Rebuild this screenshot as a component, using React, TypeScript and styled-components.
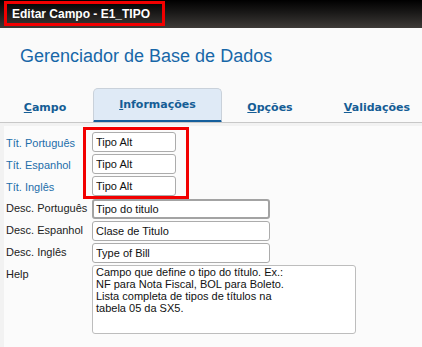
import React from "react";
import styled, { createGlobalStyle } from "styled-components";

const Global = createGlobalStyle`
  html, body { margin: 0; padding: 0; }
  body {
    background: #fafafa;
    font-family: "Liberation Sans", Arial, sans-serif;
    width: 422px;
    height: 347px;
    overflow: hidden;
  }
`;

const Window = styled.div`
  display: flex;
  flex-direction: column;
  width: 422px;
  height: 347px;
  background: #fafafa;
`;

const TitleBar = styled.div`
  height: 28px;
  box-sizing: border-box;
  padding: 1px 0 0 4px;
  background: linear-gradient(to bottom, #000000 0%, #1a1918 45%, #3e3b38 100%);
  display: flex;
  align-items: flex-start;
`;

const TitleBox = styled.div`
  height: 25px;
  box-sizing: border-box;
  border: 3px solid #f20000;
  padding: 0 12px 0 5px;
  display: flex;
  align-items: center;
  color: #ffffff;
  font-weight: bold;
  font-size: 12px;
  font-family: "Liberation Sans", Arial, sans-serif;
`;

const Header = styled.div`
  padding: 18px 0 0 20px;
  height: 60px;
  box-sizing: border-box;
`;

const Heading = styled.h1`
  margin: 0;
  font-weight: normal;
  font-size: 18px;
  line-height: 20px;
  color: #1767a8;
  font-family: "Liberation Sans", Arial, sans-serif;
`;

const TabBar = styled.div`
  display: flex;
  gap: 3px;
  height: 35px;
  box-sizing: border-box;
  border-bottom: 1px solid #c8c8c8;
  overflow: hidden;
`;

const Tab = styled.div<{ $w: number; $active?: boolean }>`
  flex: 0 0 ${(p) => p.$w}px;
  box-sizing: border-box;
  height: ${(p) => (p.$active ? 35 : 34)}px;
  display: flex;
  justify-content: center;
  align-items: flex-start;
  padding-top: ${(p) => (p.$active ? 9 : 13)}px;
  font-family: "DejaVu Sans", Verdana, sans-serif;
  font-weight: bold;
  font-size: 11px;
  line-height: 13px;
  color: #155d95;
  background: ${(p) => (p.$active ? "#dfeaf6" : "transparent")};
  border: ${(p) => (p.$active ? "1px solid #c9d1da" : "none")};
  border-bottom: ${(p) => (p.$active ? "3px solid #155f9c" : "none")};
  border-radius: ${(p) => (p.$active ? "5px 5px 0 0" : "0")};
`;

const Key = styled.span`
  text-decoration: underline;
`;

const Content = styled.div`
  flex: 1;
  background: #f2f2f2;
  padding: 3px 0 0 4px;
`;

const Panel = styled.div`
  height: 100%;
  background: #fbfbfb;
  padding-top: 1px;
  box-sizing: border-box;
`;

const TopGroup = styled.div`
  display: flex;
`;

const LabelCol = styled.div`
  width: 79px;
  box-sizing: border-box;
  padding: 5px 0 0 2px;
  display: flex;
  flex-direction: column;
`;

const Label = styled.div<{ $blue?: boolean }>`
  font-size: 11px;
  line-height: ${(p) => (p.$blue ? "22px" : "14px")};
  padding-top: ${(p) => (p.$blue ? 0 : 2)}px;
  padding-left: ${(p) => (p.$blue ? 0 : 2)}px;
  color: ${(p) => (p.$blue ? "#1d6eaa" : "#222222")};
  white-space: nowrap;
`;

const RedBox = styled.div`
  width: 106px;
  height: 72px;
  box-sizing: border-box;
  border: 3px solid #f20000;
  padding: 2px 0 0 6px;
  display: flex;
  flex-direction: column;
  gap: 2px;
`;

const Field = styled.input<{ $w: number; $focus?: boolean }>`
  width: ${(p) => p.$w}px;
  height: 20px;
  box-sizing: border-box;
  margin: 0;
  border: ${(p) => (p.$focus ? "2px solid #a3a3a3" : "1px solid #acacac")};
  border-radius: 3px;
  padding: 0 ${(p) => (p.$focus ? 2 : 3)}px;
  background: #ffffff;
  font-family: "Liberation Sans", Arial, sans-serif;
  font-size: 11px;
  color: #111111;
  outline: none;
`;

const DescGrid = styled.div`
  display: grid;
  grid-template-columns: 88px auto;
  row-gap: 2px;
  align-items: start;
  justify-items: start;
`;

const HelpArea = styled.textarea`
  width: 264px;
  height: 69px;
  box-sizing: border-box;
  margin: 0;
  border: 1px solid #bdbdbd;
  border-radius: 3px;
  padding: 0 3px;
  background: #ffffff;
  font-family: "Liberation Sans", Arial, sans-serif;
  font-size: 11px;
  line-height: 12px;
  color: #111111;
  resize: none;
  overflow: hidden;
  outline: none;
`;

const tabs = [
  { key: "C", rest: "ampo", w: 90 },
  { key: "I", rest: "nformações", w: 129, active: true },
  { key: "O", rest: "pções", w: 90 },
  { key: "V", rest: "alidações", w: 118 },
];

const helpText =
  "Campo que define o tipo do título. Ex.:\nNF para Nota Fiscal, BOL para Boleto.\nLista completa de tipos de títulos na\ntabela 05 da SX5.";

export default function App() {
  return (
    <Window>
      <Global />
      <TitleBar>
        <TitleBox>Editar Campo - E1_TIPO</TitleBox>
      </TitleBar>
      <Header>
        <Heading>Gerenciador de Base de Dados</Heading>
      </Header>
      <TabBar>
        {tabs.map((t) => (
          <Tab key={t.key} $w={t.w} $active={t.active}>
            <span>
              <Key>{t.key}</Key>
              {t.rest}
            </span>
          </Tab>
        ))}
      </TabBar>
      <Content>
        <Panel>
          <TopGroup>
            <LabelCol>
              <Label $blue>Tít. Português</Label>
              <Label $blue>Tít. Espanhol</Label>
              <Label $blue>Tít. Inglês</Label>
            </LabelCol>
            <RedBox>
              <Field $w={84} readOnly value="Tipo Alt" />
              <Field $w={84} readOnly value="Tipo Alt" />
              <Field $w={84} readOnly value="Tipo Alt" />
            </RedBox>
          </TopGroup>
          <DescGrid>
            <Label>Desc. Português</Label>
            <Field $w={178} $focus readOnly value="Tipo do titulo" />
            <Label>Desc. Espanhol</Label>
            <Field $w={178} readOnly value="Clase de Titulo" />
            <Label>Desc. Inglês</Label>
            <Field $w={178} readOnly value="Type of Bill" />
            <Label>Help</Label>
            <HelpArea readOnly value={helpText} />
          </DescGrid>
        </Panel>
      </Content>
    </Window>
  );
}
